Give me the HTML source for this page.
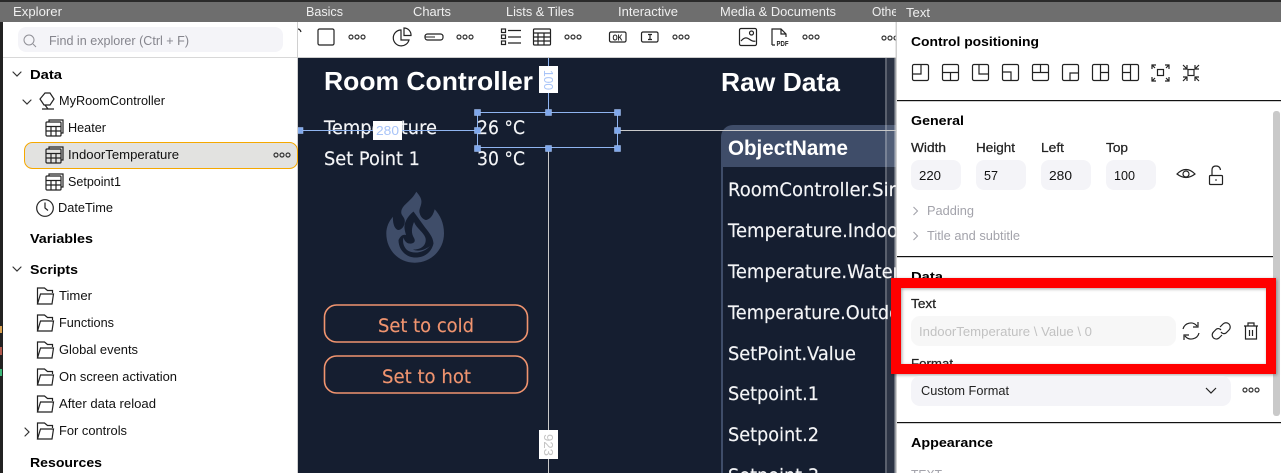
<!DOCTYPE html>
<html><head><meta charset="utf-8"><style>
html,body{margin:0;padding:0;background:#fff;overflow:hidden;width:1281px;height:473px}
svg{display:block;position:absolute;left:0;top:0}
text{font-family:"Liberation Sans",sans-serif;fill:#111;font-size:13px}
.h{fill:#f0f0f0;font-size:13px}
.b{font-weight:bold;fill:#000;font-size:13px}
.c{font-family:"DejaVu Sans",sans-serif;fill:#f4f5f7;font-size:19px;stroke:#f4f5f7;stroke-width:.15}
.o{fill:#f0946f;stroke:#f0946f}
.cb{font-family:"Liberation Sans",sans-serif;font-weight:bold;fill:#fff;font-size:26px}
.g{fill:#a3a3ab}
.m{fill:#222;stroke:#222;stroke-width:.25}
.i{fill:none;stroke:#222;stroke-width:1.2}
.l{fill:none;stroke:#333;stroke-width:1.2;stroke-linecap:round}
</style></head><body>
<svg width="1281" height="473" viewBox="0 0 1281 473" xmlns="http://www.w3.org/2000/svg">
<defs>
<g id="dots" fill="none" stroke="#333" stroke-width="1.2"><circle cx="2" cy="0" r="2"/><circle cx="8" cy="0" r="2"/><circle cx="14" cy="0" r="2"/></g>
<g id="tbl" class="i" fill="none"><rect x="0" y="3" width="15" height="14" rx="1"/><path d="M0 7.5H15M0 12H15M5 7.5V17M10 7.5V17M3 3V1H17V14H15"/></g>
<g id="fold" class="i" fill="none"><path d="M1 17V1H8L11 3.5H16V6M1 17H15.5L17 7H4L1 17Z"/></g>
<clipPath id="canvas"><rect x="298" y="58" width="598" height="415"/></clipPath>
<clipPath id="hdr"><rect x="0" y="0" width="896" height="22"/></clipPath>
<clipPath id="fmt"><rect x="901" y="288" width="365" height="76"/></clipPath>
<filter id="sh" x="-5%" y="-15%" width="110%" height="130%"><feDropShadow dx="1" dy="1" stdDeviation="1.5" flood-color="#000" flood-opacity=".35"/></filter>
</defs>

<!-- chrome -->
<rect width="1281" height="473" fill="#fff"/>
<rect width="1281" height="2" fill="#2a2a2a"/>
<rect y="2" width="1281" height="20" fill="#6e6e6e"/>
<rect y="22" width="3" height="451" fill="#222"/>
<rect x="0" y="326" width="2" height="7" fill="#d8a050"/>
<rect x="0" y="347" width="2" height="8" fill="#b0584c"/>
<rect x="0" y="369" width="2" height="7" fill="#3cb878"/>
<g clip-path="url(#hdr)">
<text class="h" x="13" y="16" textLength="49" lengthAdjust="spacingAndGlyphs">Explorer</text>
<text class="h" x="306" y="16" textLength="37" lengthAdjust="spacingAndGlyphs">Basics</text>
<text class="h" x="413" y="16" textLength="38" lengthAdjust="spacingAndGlyphs">Charts</text>
<text class="h" x="506" y="16" textLength="68" lengthAdjust="spacingAndGlyphs">Lists &amp; Tiles</text>
<text class="h" x="618" y="16" textLength="60" lengthAdjust="spacingAndGlyphs">Interactive</text>
<text class="h" x="720" y="16" textLength="116" lengthAdjust="spacingAndGlyphs">Media &amp; Documents</text>
<text class="h" x="872" y="16" textLength="36" lengthAdjust="spacingAndGlyphs">Others</text>
</g>
<text class="h" x="906" y="17" textLength="24" lengthAdjust="spacingAndGlyphs">Text</text>

<!-- explorer -->
<rect x="297" y="22" width="1" height="451" fill="#d0d0d0"/>
<rect x="3" y="57" width="294" height="1" fill="#d8d8d8"/>
<rect x="18" y="27" width="265" height="25" rx="8" fill="#f4f4f8"/>
<circle cx="29" cy="40" r="5" fill="none" stroke="#8f8f96" stroke-width="1"/><path d="M33 44L36 47" stroke="#8f8f96" fill="none"/>
<text x="49" y="45" style="fill:#85858d" textLength="140" lengthAdjust="spacingAndGlyphs">Find in explorer (Ctrl + F)</text>

<path class="l" d="M13 72L17 76L21 72"/>
<text class="b" x="30" y="79" textLength="32" lengthAdjust="spacingAndGlyphs">Data</text>
<path class="l" d="M23 100L27 104L31 100"/>
<path class="i" d="M45 93H50L54 99L50 105H44L40 99Z M45 105L48 109H54M42 109H54"/>
<text x="59" y="105" textLength="106" lengthAdjust="spacingAndGlyphs">MyRoomController</text>
<use href="#tbl" x="46" y="119"/>
<text x="68" y="132" textLength="38" lengthAdjust="spacingAndGlyphs">Heater</text>
<rect x="24.5" y="142.5" width="273" height="26" rx="8" fill="#e2e2e0" stroke="#f5a800" stroke-width="1"/>
<use href="#tbl" x="46" y="146"/>
<text x="68" y="159" textLength="111" lengthAdjust="spacingAndGlyphs">IndoorTemperature</text>
<use href="#dots" x="274" y="155"/>
<use href="#tbl" x="46" y="173"/>
<text x="68" y="186" textLength="53" lengthAdjust="spacingAndGlyphs">Setpoint1</text>
<circle cx="45" cy="208" r="8.3" class="i"/><path class="i" d="M45 202.5V208L48 210.5"/>
<text x="58" y="212" textLength="55" lengthAdjust="spacingAndGlyphs">DateTime</text>
<text class="b" x="30" y="243" textLength="63" lengthAdjust="spacingAndGlyphs">Variables</text>
<path class="l" d="M13 267L17 271L21 267"/>
<text class="b" x="30" y="274" textLength="48" lengthAdjust="spacingAndGlyphs">Scripts</text>
<use href="#fold" x="36.5" y="287"/><text x="59" y="300" textLength="33" lengthAdjust="spacingAndGlyphs">Timer</text>
<use href="#fold" x="36.5" y="314"/><text x="59" y="327" textLength="55" lengthAdjust="spacingAndGlyphs">Functions</text>
<use href="#fold" x="36.5" y="341"/><text x="59" y="354" textLength="79" lengthAdjust="spacingAndGlyphs">Global events</text>
<use href="#fold" x="36.5" y="368"/><text x="59" y="381" textLength="118" lengthAdjust="spacingAndGlyphs">On screen activation</text>
<use href="#fold" x="36.5" y="395"/><text x="59" y="408" textLength="97" lengthAdjust="spacingAndGlyphs">After data reload</text>
<path class="l" d="M25 428L29 432L25 436"/>
<use href="#fold" x="36.5" y="422"/><text x="59" y="435" textLength="68" lengthAdjust="spacingAndGlyphs">For controls</text>
<text class="b" x="30" y="467" textLength="72" lengthAdjust="spacingAndGlyphs">Resources</text>

<!-- toolbar -->
<rect x="298" y="57" width="598" height="1" fill="#ccc"/>
<path class="i" d="M298 29Q300 29 301 32"/>
<rect x="318" y="29" width="16" height="16" rx="1.5" class="i"/>
<use href="#dots" x="349" y="37"/>
<path class="i" d="M400 30A8 8 0 1 0 409 40H401V30ZM404 28A7 7 0 0 1 411 35.5H404Z"/>
<rect x="425" y="34" width="18" height="6" rx="2.5" class="i"/><path d="M425 37H435" stroke="#222" fill="none"/>
<use href="#dots" x="457" y="37"/>
<g class="i"><rect x="501.500" y="29" width="4" height="3.500"/><rect x="501.500" y="35" width="4" height="3.500"/><rect x="501.500" y="41" width="4" height="3.500"/><path d="M508 30.500H521M508 37H521M508 43H521"/></g>
<g class="i"><rect x="533.500" y="29" width="17" height="16" rx="1"/><path d="M533.500 33H550.500M533.500 37H550.500M533.500 41H550.500M538 33V45M544 33V45"/></g>
<use href="#dots" x="565" y="37"/>
<rect x="609.500" y="32" width="16.500" height="10" rx="1.500" class="i"/>
<text x="612.500" y="40.500" style="font-size:8px;font-weight:bold;fill:#222" textLength="10" lengthAdjust="spacingAndGlyphs">OK</text>
<rect x="641.500" y="32" width="16.500" height="10" rx="1.500" class="i"/><path class="i" d="M648 34.500H652M648 39.500H652M650 34.500V39.500"/>
<use href="#dots" x="673" y="37"/>
<rect x="739.500" y="28.500" width="17" height="17" rx="1.500" class="i"/><circle cx="751.500" cy="33" r="2" class="i"/><path class="i" d="M741 41Q745 36 749 39T755.500 41"/>
<path class="i" d="M772 45V29H781L786 34V37M781 29V34H786M772 45H775"/>
<text x="776.500" y="46" style="font-size:7.500px;font-weight:bold;fill:#222" textLength="12" lengthAdjust="spacingAndGlyphs">PDF</text>
<use href="#dots" x="803" y="37"/>
<use href="#dots" x="882" y="38"/>

<!-- canvas -->
<g clip-path="url(#canvas)">
<rect x="298" y="58" width="598" height="415" fill="#151e30"/>
<text class="cb" x="324" y="90" textLength="209" lengthAdjust="spacingAndGlyphs">Room Controller</text>
<text class="cb" x="721" y="91" textLength="119" lengthAdjust="spacingAndGlyphs">Raw Data</text>
<text class="c" x="324" y="134" textLength="113" lengthAdjust="spacingAndGlyphs">Temperature</text>
<text class="c" x="324" y="165" textLength="96" lengthAdjust="spacingAndGlyphs">Set Point 1</text>
<text class="c" x="477" y="134" textLength="48" lengthAdjust="spacingAndGlyphs">26 °C</text>
<text class="c" x="477" y="165" textLength="48" lengthAdjust="spacingAndGlyphs">30 °C</text>

<!-- flame -->
<path fill="#3f4d69" d="M416.300 191.700C420 196 422 199 421.300 203.300C420.800 207 418.500 210 419.700 213.300C420.500 217 423.500 220 426.300 220C431 219 433.500 214 434.700 209.300C440 215 444 223 444 233.300C444 250 431 262.700 414.700 262.700C398.500 262.700 386.300 250 386.300 233.300C386.300 227 389 221 393 216.700C392.500 223 394.500 229 398 230C402 230 405.500 225 404.700 220C404 217 402 216 401.300 213.300C400.500 205 411 202 416.300 191.700Z"/>
<path fill="#151e30" d="M413.500 211.500C408 216 404 222 404.500 228C404.800 231 405.500 233 406 235C403 234 400.500 236 398.500 240C398.500 250 406 257.500 415.500 257.500C425 257.500 431.500 252 433.500 243.500C433 236 427.500 231 424 226C420.500 221 417 216.500 413.500 211.500Z"/>
<path fill="#3f4d69" d="M414 222C411.500 228 411 233 414 238C416 241.500 414 244 409 243.500C406 243 404 240 403.500 237.500C402.500 241 403 246 407 250C413 254.500 424 253 430 246C425 250 418 252 413 249.500C421 250 427 245 425.500 238C423.500 232 417 229 414 222Z"/>

<!-- buttons -->
<rect x="324.500" y="305" width="203" height="37" rx="12" fill="none" stroke="#f0946f" stroke-width="1.600"/>
<rect x="324.500" y="356" width="203" height="37" rx="12" fill="none" stroke="#f0946f" stroke-width="1.600"/>
<text class="c o" x="378" y="332" textLength="96" lengthAdjust="spacingAndGlyphs">Set to cold</text>
<text class="c o" x="382" y="383" textLength="89" lengthAdjust="spacingAndGlyphs">Set to hot</text>

<!-- table -->
<path d="M721 473V137A12 12 0 0 1 733 125H896V167H723V473Z" fill="#3f4d69"/>
<text class="cb" style="font-size:21px" x="728" y="155" textLength="120" lengthAdjust="spacingAndGlyphs">ObjectName</text>
<text class="c" x="728" y="196" textLength="168" lengthAdjust="spacingAndGlyphs">RoomController.Sir</text>
<text class="c" x="728" y="237" textLength="170" lengthAdjust="spacingAndGlyphs">Temperature.Indoo</text>
<text class="c" x="728" y="278" textLength="172" lengthAdjust="spacingAndGlyphs">Temperature.Water</text>
<text class="c" x="728" y="319" textLength="172" lengthAdjust="spacingAndGlyphs">Temperature.Outdo</text>
<text class="c" x="728" y="360" textLength="128" lengthAdjust="spacingAndGlyphs">SetPoint.Value</text>
<text class="c" x="728" y="400" textLength="91" lengthAdjust="spacingAndGlyphs">Setpoint.1</text>
<text class="c" x="728" y="441" textLength="91" lengthAdjust="spacingAndGlyphs">Setpoint.2</text>
<text class="c" x="728" y="482" textLength="91" lengthAdjust="spacingAndGlyphs">Setpoint.3</text>

<!-- vertical bands at right -->
<rect x="885" y="58" width="11" height="415" fill="#fff" fill-opacity=".1"/>
<rect x="885" y="58" width="2" height="415" fill="#fff" fill-opacity=".22"/>
<rect x="894" y="58" width="2" height="415" fill="#fff" fill-opacity=".28"/>

<!-- guides -->
<path d="M617 130.500H896M548.500 148V473" stroke="#c9c9c9" stroke-width="1" fill="none"/>
<path d="M298 130.500H477M548.500 58V112" stroke="#8fb4f0" stroke-width="1" fill="none"/>
<rect x="477.500" y="112.500" width="140" height="35" fill="none" stroke="#8fb4f0" stroke-width="1"/>
<g fill="#7fa8ec" stroke="#a9c5f5" stroke-width=".5">
<rect x="474.500" y="109.500" width="6" height="6"/><rect x="545.500" y="109.500" width="6" height="6"/><rect x="614.500" y="109.500" width="6" height="6"/>
<rect x="474.500" y="127.500" width="6" height="6"/><rect x="614.500" y="127.500" width="6" height="6"/>
<rect x="474.500" y="145.500" width="6" height="6"/><rect x="545.500" y="145.500" width="6" height="6"/><rect x="614.500" y="145.500" width="6" height="6"/>
<rect x="298" y="127.500" width="5" height="6"/>
</g>
<rect x="539" y="66" width="19" height="27" fill="#fff"/>
<text transform="translate(544,70) rotate(90)" style="fill:#a8c4f8;font-size:13px" textLength="20" lengthAdjust="spacingAndGlyphs">100</text>
<rect x="373" y="121" width="29" height="19" fill="#fff"/>
<text x="376" y="135" style="fill:#a8c4f8;font-size:13px" textLength="23" lengthAdjust="spacingAndGlyphs">280</text>
<rect x="539" y="430" width="19" height="29" fill="#fff"/>
<text transform="translate(544,434) rotate(90)" style="fill:#c4c4c4;font-size:13px" textLength="22" lengthAdjust="spacingAndGlyphs">923</text>
</g>

<!-- right panel -->
<rect x="896" y="22" width="385" height="451" fill="#fff"/>
<rect x="895.500" y="22" width="1.500" height="451" fill="#d0d0d0"/>
<text class="b" x="911" y="46" textLength="128" lengthAdjust="spacingAndGlyphs">Control positioning</text>
<g class="i" stroke="#333" fill="none">
<rect x="912.500" y="64.500" width="16" height="16" rx="1.500"/><path d="M912.500 74H921V64.500"/>
<rect x="942.500" y="64.500" width="16" height="16" rx="1.500"/><path d="M942.500 72.500H958.500M950.500 72.500V80.500"/>
<rect x="972.500" y="64.500" width="16" height="16" rx="1.500"/><path d="M979 64.500V74H988.500"/>
<rect x="1002.500" y="64.500" width="16" height="16" rx="1.500"/><path d="M1002.500 72H1011V80.500"/>
<rect x="1032.500" y="64.500" width="16" height="16" rx="1.500"/><path d="M1032.500 72.500H1048.500M1040.500 64.500V72.500"/>
<rect x="1062.500" y="64.500" width="16" height="16" rx="1.500"/><path d="M1070 80.500V73H1078.500"/>
<rect x="1092.500" y="64.500" width="16" height="16" rx="1.500"/><path d="M1100.500 64.500V80.500M1100.500 72.500H1108.500"/>
<rect x="1122.500" y="64.500" width="16" height="16" rx="1.500"/><path d="M1130.500 64.500V80.500M1122.500 72.500H1130.500"/>
<rect x="1157.500" y="69.500" width="6" height="6"/>
<path d="M1152 69V65H1156M1152 65L1155 68M1169 69V65H1165M1169 65L1166 68M1152 77V81H1156M1152 81L1155 78M1169 77V81H1165M1169 81L1166 78"/>
<rect x="1188" y="69.500" width="6" height="6"/>
<path d="M1183 65L1187 69M1187 65V69H1183M1199 65L1195 69M1195 65V69H1199M1183 81L1187 77M1187 81V77H1183M1199 81L1195 77M1195 81V77H1199"/>
</g>
<rect x="897" y="100" width="384" height="1.200" fill="#111"/>
<text class="b" x="911" y="125" textLength="53" lengthAdjust="spacingAndGlyphs">General</text>
<text class="m" x="911" y="152" textLength="35" lengthAdjust="spacingAndGlyphs">Width</text>
<text class="m" x="976" y="152" textLength="39" lengthAdjust="spacingAndGlyphs">Height</text>
<text class="m" x="1041" y="152" textLength="23" lengthAdjust="spacingAndGlyphs">Left</text>
<text class="m" x="1106" y="152" textLength="22" lengthAdjust="spacingAndGlyphs">Top</text>
<g fill="#f4f4f8"><rect x="911" y="160" width="50" height="30" rx="8"/><rect x="976" y="160" width="50" height="30" rx="8"/><rect x="1041" y="160" width="50" height="30" rx="8"/><rect x="1106" y="160" width="50" height="30" rx="8"/></g>
<text x="919" y="180" textLength="22" lengthAdjust="spacingAndGlyphs">220</text>
<text x="984" y="180" textLength="14" lengthAdjust="spacingAndGlyphs">57</text>
<text x="1049" y="180" textLength="23" lengthAdjust="spacingAndGlyphs">280</text>
<text x="1114" y="180" textLength="21" lengthAdjust="spacingAndGlyphs">100</text>
<path class="i" d="M1177 174Q1186 165 1195 174Q1186 181 1177 174Z"/><circle cx="1186" cy="174" r="3" class="i"/>
<rect x="1209.500" y="175.500" width="13" height="9" rx="1" class="i"/><path class="i" d="M1212 175.500V170Q1212 166 1216 166Q1220 166 1220.500 170"/><path d="M1216 179V181" stroke="#222" fill="none"/>
<path d="M913.500 207L917.500 211L913.500 215" fill="none" stroke="#a3a3ab" stroke-width="1.100"/>
<text class="g" x="927" y="215" textLength="47" lengthAdjust="spacingAndGlyphs">Padding</text>
<path d="M913.500 232L917.500 236L913.500 240" fill="none" stroke="#a3a3ab" stroke-width="1.100"/>
<text class="g" x="927" y="240" textLength="93" lengthAdjust="spacingAndGlyphs">Title and subtitle</text>
<rect x="897" y="256" width="376" height="1.200" fill="#111"/>
<rect x="1273" y="111" width="7" height="305" rx="3" fill="#c9c9c9"/>
<text class="b" x="911" y="281" textLength="32" lengthAdjust="spacingAndGlyphs">Data</text>

<rect x="901" y="288" width="365" height="76" fill="#fff"/>
<text class="m" x="911" y="308" textLength="25" lengthAdjust="spacingAndGlyphs">Text</text>
<rect x="911" y="316" width="265" height="30" rx="9" fill="#f7f7f7"/>
<text x="919" y="336" style="fill:#c2c2c2" textLength="173" lengthAdjust="spacingAndGlyphs">IndoorTemperature \ Value \ 0</text>
<g class="i" stroke-width="1.300">
<path d="M1183 329A8 8 0 0 1 1197 326M1199 333A8 8 0 0 1 1185 336M1198 322V327H1193M1184 340V335H1189"/>
<path d="M1220 327L1223 324A3.500 3.500 0 0 1 1229 330L1226 333A3.500 3.500 0 0 1 1221 332M1222 335L1219 338A3.500 3.500 0 0 1 1213.500 332L1216.500 329A3.500 3.500 0 0 1 1221 330"/>
<path d="M1244 326H1258M1248 326V323H1254V326M1245.500 326V339H1256.500V326M1249.500 330V336M1252.500 330V336"/>
</g>
<g clip-path="url(#fmt)"><text class="m" x="911" y="368" textLength="42" lengthAdjust="spacingAndGlyphs">Format</text></g>

<path d="M896 283H1271V369H896Z" fill="none" stroke="#ff0000" stroke-width="10" filter="url(#sh)"/>

<rect x="911" y="376" width="320" height="30" rx="9" fill="#f4f4f8"/>
<text x="921" y="395" style="fill:#222" textLength="88" lengthAdjust="spacingAndGlyphs">Custom Format</text>
<path d="M1206 388L1211 393L1216 388" fill="none" stroke="#222" stroke-width="1.200"/>
<use href="#dots" x="1243" y="390"/>
<rect x="897" y="422" width="384" height="1.200" fill="#111"/>
<text class="b" x="911" y="447" textLength="82" lengthAdjust="spacingAndGlyphs">Appearance</text>
<text class="g" x="911" y="479" textLength="31" lengthAdjust="spacingAndGlyphs">TEXT</text>
</svg>
</body></html>
